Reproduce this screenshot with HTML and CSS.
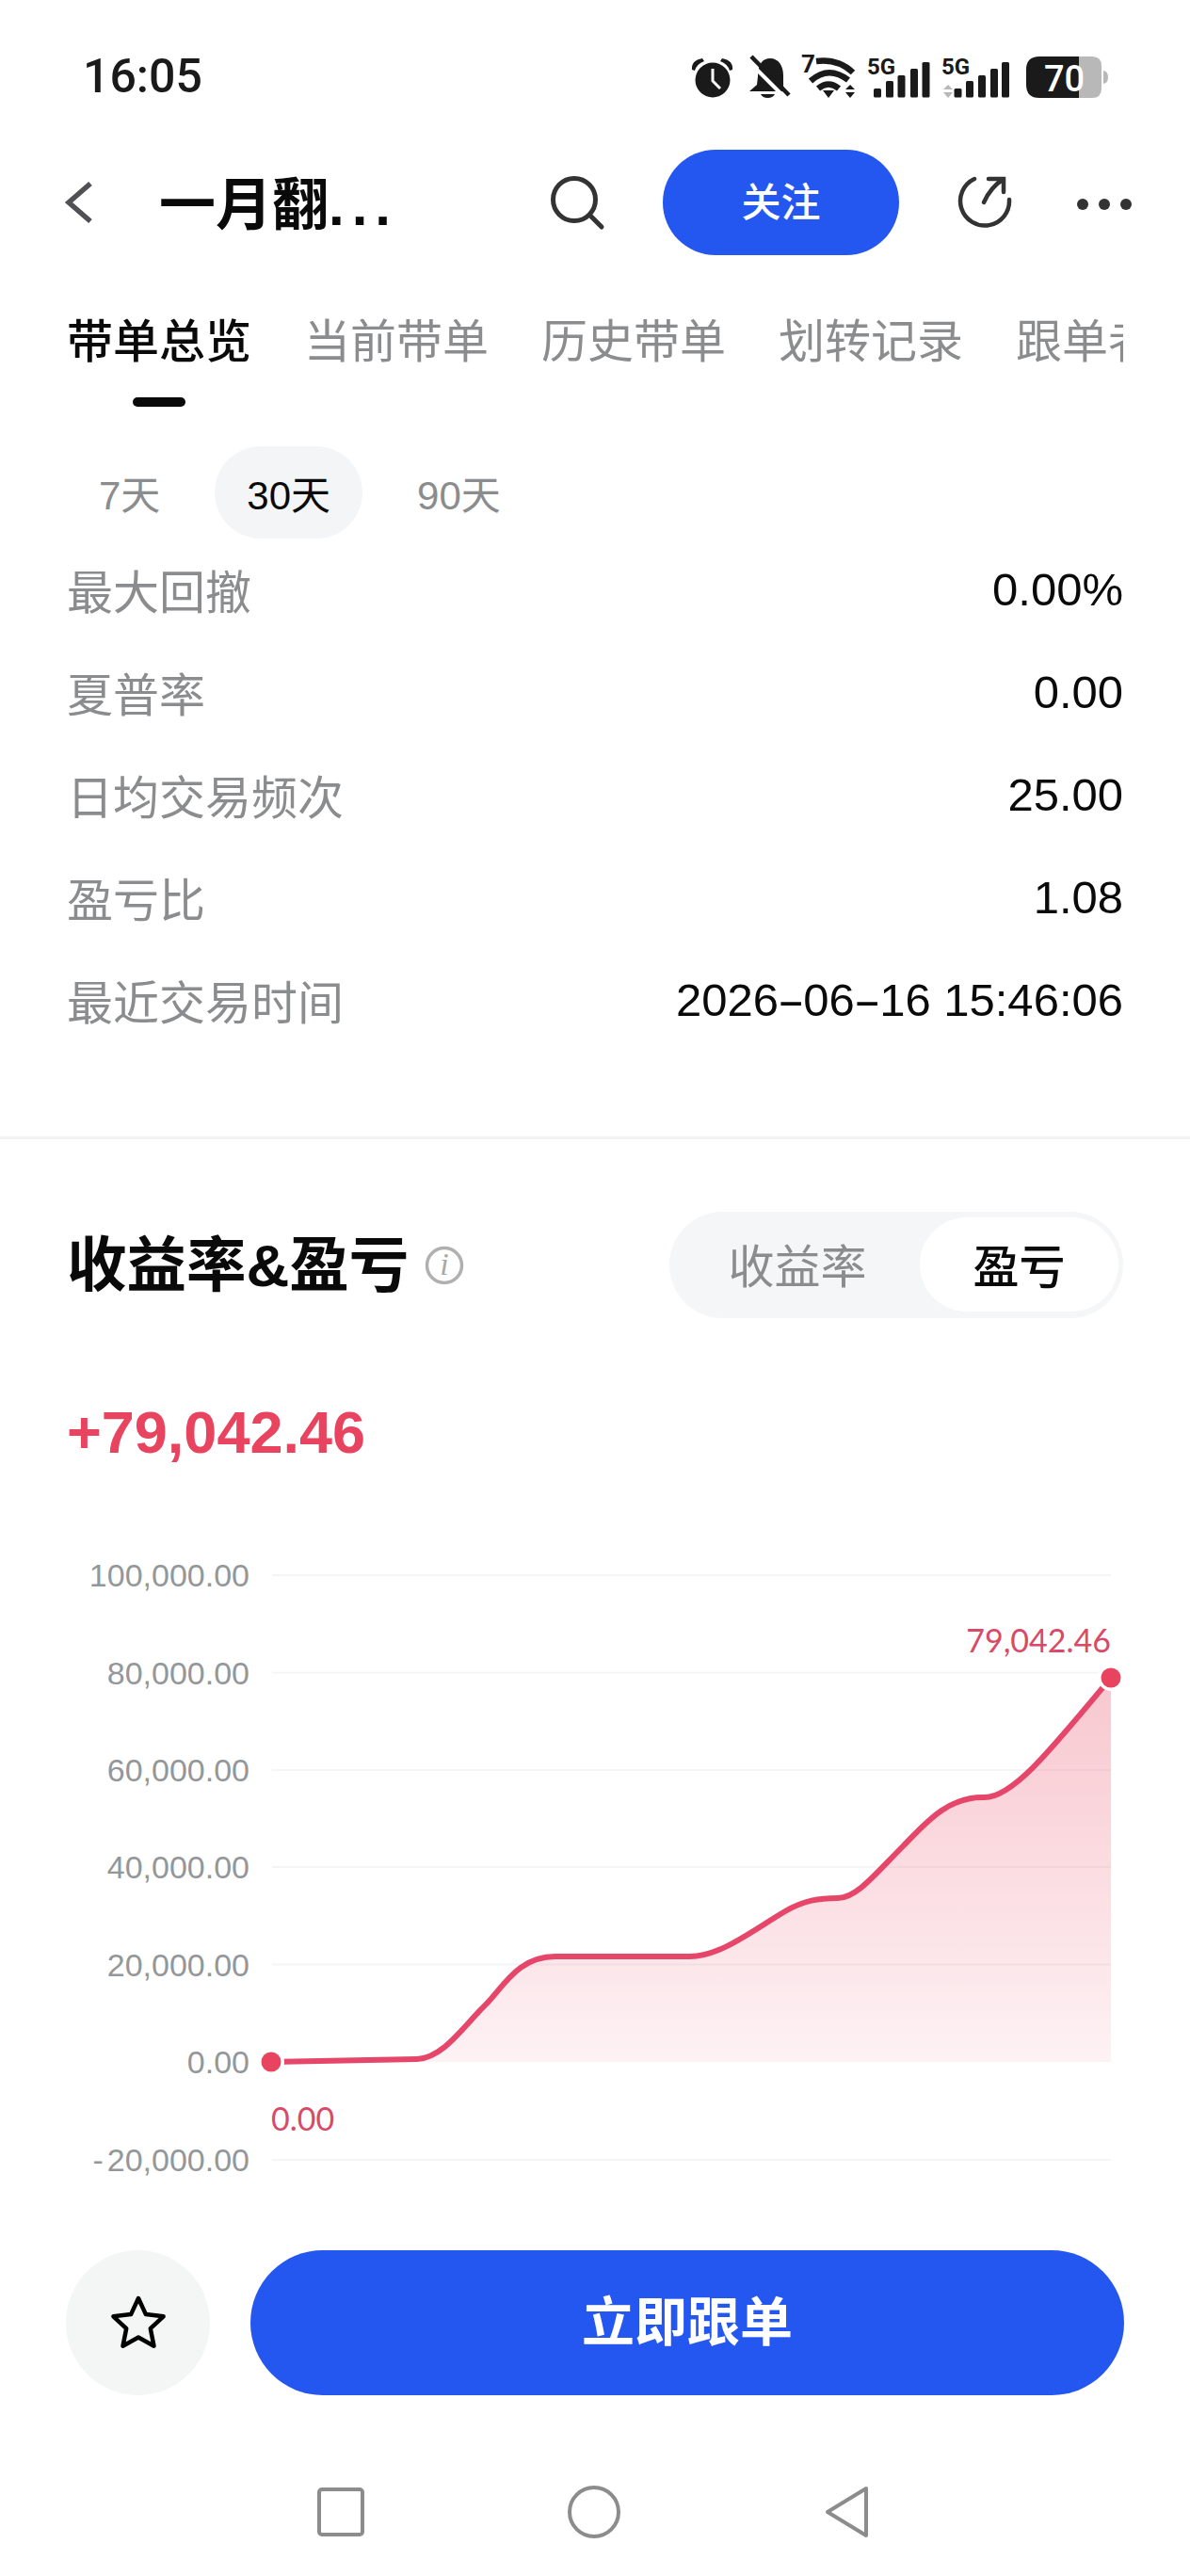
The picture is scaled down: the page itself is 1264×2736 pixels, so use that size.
FILE: index.html
```html
<!DOCTYPE html>
<html lang="zh-CN">
<head>
<meta charset="utf-8">
<title>带单总览</title>
<link rel="stylesheet" href="styles.css">
</head>
<body>
<div class="page">
  <header class="status">
    <span class="time">16:05</span>
    <svg class="status-icons" viewBox="730 50 450 60" width="450" height="60">
      <g class="ink">
        <circle cx="757" cy="83" r="18.5"/>
        <path d="M735 72Q734 62 746 60L748 63Q740 66 738 73Z"/>
        <path d="M778 72Q779 62 767 60L765 63Q773 66 775 73Z"/>
        <path d="M805 79C805 66 810 60 818 60C827 60 832 68 832 78V90L836 95H796L804 88Z"/>
        <path d="M808 98H823Q821 102 815.500 102Q810 102 808 98Z"/>
      </g>
      <polyline class="hand" points="757,71 757,84 765,92"/>
      <line class="slash-gap" x1="794" y1="62" x2="836" y2="104"/>
      <line class="slash" x1="798" y1="58" x2="838" y2="99"/>
      <text class="st-seven" x="851" y="75">7</text>
      <path class="wifi" d="M867 63Q890 60 906 75"/>
      <path class="wifi" d="M861 84Q880 67 901 83"/>
      <path class="wifi" d="M869 92Q880 83 891 92"/>
      <g class="ink">
        <path d="M874 94H886L880 102Z"/>
        <path d="M903 88L908 93H898Z"/>
        <path d="M898 96H908L903 102Z"/>
      </g>
      <text class="st-5g" x="921" y="77">5G</text>
      <g class="ink">
        <rect x="928" y="92" width="8" height="9.500" rx="1.500"/>
        <rect x="941" y="84" width="8" height="17.500" rx="1.500"/>
        <rect x="953.500" y="78" width="8" height="23.500" rx="1.500"/>
        <rect x="967" y="71" width="8" height="30.500" rx="1.500"/>
        <rect x="979.500" y="64" width="8" height="37.500" rx="1.500"/>
      </g>
      <text class="st-5g" x="1000" y="77">5G</text>
      <g class="mute">
        <path d="M1007 88L1012 93H1002Z"/>
        <path d="M1002 96H1012L1007 102Z"/>
      </g>
      <g class="ink">
        <rect x="1013.500" y="92" width="8" height="9.500" rx="1.500"/>
        <rect x="1026" y="84" width="8" height="17.500" rx="1.500"/>
        <rect x="1039" y="78" width="8" height="23.500" rx="1.500"/>
        <rect x="1052" y="71" width="8" height="30.500" rx="1.500"/>
        <rect x="1064" y="64" width="8" height="37.500" rx="1.500"/>
      </g>
      <path class="mute" d="M1146 58H1160Q1170 58 1170 68V92Q1170 102 1160 102H1146Z"/>
      <path class="ink" d="M1146 58H1104Q1090 58 1090 72V88Q1090 102 1104 102H1146Z"/>
      <path class="mute" d="M1172 73Q1177 74 1177 80Q1177 86 1172 87Z"/>
      <text class="st-batt" x="1109" y="95">70</text>
    </svg>
  </header>

  <nav class="topbar">
    <svg class="ic-back" viewBox="0 0 32 46" width="32" height="46"><polyline class="stroke-back" points="28,3 5,23 28,43"/></svg>
    <h1 class="trader">一月翻<span class="dots">...</span></h1>
    <svg class="ic-search" viewBox="0 0 60 60" width="60" height="60"><circle class="stroke-dark" cx="26" cy="26" r="22.500"/><line class="stroke-dark" x1="43" y1="43" x2="55" y2="55"/></svg>
    <button class="follow">关注</button>
    <svg class="ic-share" viewBox="0 0 62 60" width="62" height="60"><path class="stroke-thin" d="M19 5A26 26 0 1 0 56 27"/><path class="stroke-thin" d="M29 30Q36 14 50 5M34 5H50V19"/></svg>
    <svg class="ic-more" viewBox="0 0 60 14" width="60" height="14"><circle cx="7" cy="7" r="6"/><circle cx="30" cy="7" r="6"/><circle cx="53" cy="7" r="6"/></svg>
  </nav>

  <div class="tabs">
    <div class="tab tab-active">带单总览</div>
    <div class="tab">当前带单</div>
    <div class="tab">历史带单</div>
    <div class="tab">划转记录</div>
    <div class="tab">跟单者</div>
  </div>

  <div class="periods">
    <span class="pill">7天</span>
    <span class="pill pill-on">30天</span>
    <span class="pill">90天</span>
  </div>

  <section class="stats">
    <div class="row"><span class="k">最大回撤</span><span class="v">0.00%</span></div>
    <div class="row"><span class="k">夏普率</span><span class="v">0.00</span></div>
    <div class="row"><span class="k">日均交易频次</span><span class="v">25.00</span></div>
    <div class="row"><span class="k">盈亏比</span><span class="v">1.08</span></div>
    <div class="row"><span class="k">最近交易时间</span><span class="v">2026<span class="dash">-</span>06<span class="dash">-</span>16 15:46:06</span></div>
  </section>

  <div class="divider"></div>

  <section class="pnl-head">
    <div class="pnl-title">
      <h2>收益率&amp;盈亏</h2>
      <svg class="ic-info" viewBox="0 0 42 42" width="42" height="42"><circle cx="21" cy="21" r="18.500"/><text x="21" y="31">i</text></svg>
    </div>
    <div class="segment">
      <span class="seg seg-off">收益率</span>
      <span class="seg seg-on">盈亏</span>
    </div>
  </section>

  <div class="amount">+79,042.46</div>

  <svg class="chart" viewBox="0 1640 1264 700" width="1264" height="700">
    <defs>
      <linearGradient id="areaFill" x1="0" y1="0" x2="0" y2="1">
        <stop offset="0" stop-color="#e8445f" stop-opacity="0.3"/>
        <stop offset="1" stop-color="#e8445f" stop-opacity="0.07"/>
      </linearGradient>
    </defs>
    <g class="grid">
      <line x1="289" x2="1180" y1="1673" y2="1673"/>
      <line x1="289" x2="1180" y1="1776.500" y2="1776.500"/>
      <line x1="289" x2="1180" y1="1880" y2="1880"/>
      <line x1="289" x2="1180" y1="1983" y2="1983"/>
      <line x1="289" x2="1180" y1="2086.500" y2="2086.500"/>
      <line x1="289" x2="1180" y1="2294" y2="2294"/>
    </g>
    <g class="axis">
      <text x="265" y="1685">100,000.00</text>
      <text x="265" y="1788.500">80,000.00</text>
      <text x="265" y="1892">60,000.00</text>
      <text x="265" y="1995">40,000.00</text>
      <text x="265" y="2098.500">20,000.00</text>
      <text x="265" y="2202">0.00</text>
      <text x="265" y="2306">-<tspan dx="4">20,000.00</tspan></text>
    </g>
    <path fill="url(#areaFill)" d="M288 2190L443 2187C470 2186 490 2155 516 2129C535 2110 550 2078 590 2078L733 2078C765 2078 800 2050 834 2030C854 2018.500 870 2016 890 2016C910 2016 930 1990 960 1960C980 1940 1005 1908 1045 1909C1075 1910 1115 1860 1180 1782L1180 2190Z"/>
    <path class="curve" d="M288 2190L443 2187C470 2186 490 2155 516 2129C535 2110 550 2078 590 2078L733 2078C765 2078 800 2050 834 2030C854 2018.500 870 2016 890 2016C910 2016 930 1990 960 1960C980 1940 1005 1908 1045 1909C1075 1910 1115 1860 1180 1782"/>
    <circle class="ring" cx="288" cy="2190" r="14"/>
    <circle class="ring" cx="1180" cy="1782" r="14"/>
    <circle class="node" cx="288" cy="2190" r="10.500"/>
    <circle class="node" cx="1180" cy="1782" r="10.500"/>
    <text class="point" x="1180" y="1755" text-anchor="end">79,042.46</text>
    <text class="point" x="288" y="2263">0.00</text>
  </svg>

  <footer class="actions">
    <button class="fav"><svg viewBox="0 0 64 60" width="64" height="60"><polygon class="star" points="32,4 39.900,21.100 58.600,23.300 44.800,36.200 48.500,54.700 32,45.500 15.500,54.700 19.200,36.200 5.400,23.300 24.100,21.100"/></svg></button>
    <button class="cta">立即跟单</button>
  </footer>

  <div class="sysnav">
    <svg class="nav-square" viewBox="0 0 50 52" width="50" height="52"><rect x="2" y="2" width="46" height="48" rx="3"/></svg>
    <svg class="nav-circle" viewBox="0 0 56 56" width="56" height="56"><circle cx="28" cy="28" r="26"/></svg>
    <svg class="nav-back" viewBox="0 0 47 56" width="47" height="56"><path d="M44 3V53L3 28Z"/></svg>
  </div>
</div>
</body>
</html>
```

FILE: styles.css
```css
* { box-sizing: border-box; }
html, body { margin: 0; padding: 0; background: #fff; }
body { font-family: "Liberation Sans", "Noto Sans CJK SC", sans-serif; color: #0a0a0a; }
h1, h2 { margin: 0; }
button { border: 0; padding: 0; font: inherit; }
.page { width: 1264px; height: 2736px; overflow: hidden; background: #fff; }

/* status bar */
.status { height: 159px; padding: 3px 0 0 88px; display: flex; align-items: center; }
.time { font-family: Roboto, sans-serif; font-size: 50px; font-weight: 500; color: #1a1a1a; }
.status-icons { margin-left: 515px; margin-top: 1px; flex-shrink: 0; }
.ink { fill: #1a1a1a; }
.mute { fill: #b8b8b8; }
.hand { fill: none; stroke: #fff; stroke-width: 3; }
.slash { stroke: #1a1a1a; stroke-width: 4.500; }
.slash-gap { stroke: #fff; stroke-width: 4; }
.wifi { fill: none; stroke: #1a1a1a; stroke-width: 6.500; }
.st-seven { font-family: Roboto, sans-serif; font-size: 26px; font-weight: 700; fill: #1a1a1a; }
.st-5g { font-family: Roboto, sans-serif; font-size: 24px; font-weight: 700; fill: #1a1a1a; }
.st-batt { font-family: Roboto, sans-serif; font-size: 38px; font-weight: 500; fill: #fff; }

/* top bar */
.topbar { height: 112px; padding-left: 68px; display: flex; align-items: center; }
.ic-back { flex-shrink: 0; }
.stroke-back { fill: none; stroke: #505055; stroke-width: 5.500; }
.trader { margin-left: 69px; width: 315px; padding-top: 8px; font-size: 60px; line-height: 70px; font-weight: 700; white-space: nowrap; }
.dots { letter-spacing: 8px; }
.ic-search { margin-left: 100px; flex-shrink: 0; margin-top: 1px; }
.stroke-dark { fill: none; stroke: #333; stroke-width: 5; stroke-linecap: round; }
.follow { margin-left: 60px; width: 251px; height: 112px; padding-bottom: 7px; border-radius: 56px; background: #2456f0; color: #fff; font-size: 42px; font-weight: 500; flex-shrink: 0; }
.ic-share { margin-left: 61px; flex-shrink: 0; }
.stroke-thin { fill: none; stroke: #333; stroke-width: 4.500; stroke-linecap: round; }
.ic-more { margin-left: 65px; fill: #333; flex-shrink: 0; margin-top: 4px; }

/* tabs */
.tabs { margin: 0 0 42px 71px; width: 1122px; display: flex; gap: 56px; overflow: hidden; align-items: flex-start; }
.tab { flex: 0 0 auto; padding-top: 57px; font-size: 49px; line-height: 70px; color: #8a8c8e; white-space: nowrap; }
.tab-active { color: #0a0a0a; font-weight: 500; }
.tab-active::after { content: ""; display: block; width: 56px; height: 10px; margin: 24px auto 0; border-radius: 5px; background: #0a0a0a; }

/* period pills */
.periods { margin-left: 71px; display: flex; gap: 24px; }
.pill { height: 98px; padding: 0 34px 2px; border-radius: 49px; display: flex; align-items: center; font-size: 42px; color: #8a8c8e; }
.pill-on { background: #f4f5f6; color: #0a0a0a; }

/* stats */
.stats { margin: -1px 71px 0 71px; }
.row { height: 109px; display: flex; justify-content: space-between; align-items: center; }
.k { font-size: 49px; color: #8a8c8e; }
.v { font-size: 49px; color: #0a0a0a; }
.dash { display: inline-block; margin: 0 5px; transform: scaleX(1.8); }

.divider { height: 3px; margin-top: 91px; background: #f0f2f4; }

/* pnl */
.pnl-head { margin: 77px 71px 0 71px; display: flex; justify-content: space-between; align-items: center; }
.pnl-title { display: flex; align-items: center; gap: 17px; }
.pnl-title h2 { font-size: 63.500px; line-height: 70px; font-weight: 700; }
.ic-info { fill: none; flex-shrink: 0; }
.ic-info circle { stroke: #b0b0b0; stroke-width: 3.500; }
.ic-info text { font-family: "Liberation Serif", serif; font-style: italic; font-size: 34px; text-anchor: middle; fill: #a8a8a8; }
.segment { width: 482px; height: 113px; padding: 6px 5px 7px 0; border-radius: 57px; background: #f4f6f7; display: flex; align-items: stretch; font-size: 49px; }
.seg { display: flex; align-items: center; justify-content: center; padding-bottom: 4px; }
.seg-off { flex: 1; color: #8a8c8e; padding-left: 6px; }
.seg-on { width: 211px; border-radius: 50px; background: #fff; font-weight: 500; color: #0a0a0a; }

.amount { margin: 86px 0 0 71px; font-size: 63px; line-height: 70px; font-weight: 700; color: #e8445f; }

/* chart */
.chart { display: block; margin-top: 84px; }
.grid line { stroke: #f4f5f6; stroke-width: 2; }
.axis text { font-size: 34px; fill: #939799; text-anchor: end; }
.curve { fill: none; stroke: #e5466a; stroke-width: 6; }
.ring { fill: #fff; }
.node { fill: #e8445f; }
.point { font-family: Lato, sans-serif; font-size: 34px; fill: #d84a68; }

/* footer */
.actions { margin: 50px 70px 0; height: 154px; display: flex; gap: 43px; }
.fav { width: 153px; height: 154px; border-radius: 50%; background: #f4f5f5; display: flex; align-items: center; justify-content: center; flex-shrink: 0; }
.star { fill: none; stroke: #000; stroke-width: 4.500; stroke-linejoin: round; }
.cta { flex: 1; padding-bottom: 11px; border-radius: 77px; background: #2456f0; color: #fff; font-size: 56px; font-weight: 700; }

/* system nav */
.sysnav { margin-top: 96px; padding-left: 337px; height: 56px; display: flex; align-items: center; }
.sysnav svg { flex-shrink: 0; fill: none; stroke: #8c8c8c; stroke-width: 4; stroke-linejoin: round; }
.nav-square { margin-right: 216px; }
.nav-circle { margin-right: 217px; }
```
